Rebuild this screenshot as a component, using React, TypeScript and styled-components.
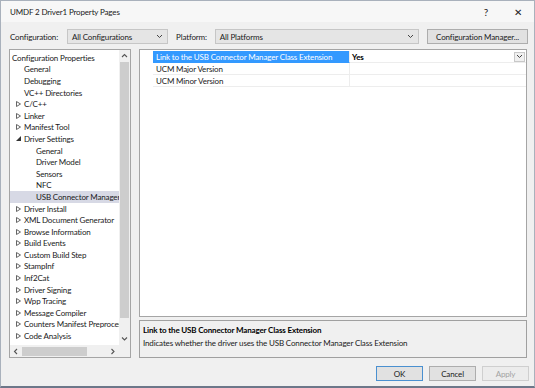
import React from 'react'
import styled, { createGlobalStyle } from 'styled-components'

const GlobalStyle = createGlobalStyle`
  html, body {
    margin: 0;
    padding: 0;
    background: #f0f0f0;
  }
  * {
    box-sizing: border-box;
  }
`

const Window = styled.div`
  width: 535px;
  height: 388px;
  display: flex;
  flex-direction: column;
  background: #f0f0f0;
  border: 1px solid #a9b1bc;
  border-bottom: 2px solid #6d7789;
  font-family: Lato, 'Liberation Sans', sans-serif;
  font-size: 8px;
  letter-spacing: -0.15px;
  color: #1a1a1a;
  overflow: hidden;
`

const TitleBar = styled.div`
  height: 21px;
  display: flex;
  align-items: center;
  padding: 0 0 0 9px;
  background: #f7f7f7;
`

const Title = styled.div`
  flex: 1;
`

const Caption = styled.div`
  width: 32px;
  text-align: center;
  font-size: 10px;
  color: #222;
`

const ConfigRow = styled.div`
  display: flex;
  align-items: center;
  height: 15px;
  margin-top: 7px;
  padding: 0 6px 0 9px;
`

const Label = styled.div<{ $gap: number }>`
  margin-right: ${(p) => p.$gap}px;
`

const Select = styled.div<{ $width?: number }>`
  height: 15px;
  ${(p) => (p.$width ? `width: ${p.$width}px;` : 'flex: 1;')}
  display: flex;
  align-items: center;
  justify-content: space-between;
  padding: 0 4px 0 4px;
  margin-right: 8px;
  background: #e5e5e5;
  border: 1px solid #c6c6c6;
`

const Chevron = () => (
  <svg width="7" height="5" viewBox="0 0 7 5">
    <path d="M1 1 L3.5 3.5 L6 1" fill="none" stroke="#444" strokeWidth="1" />
  </svg>
)

const Button = styled.div<{ $default?: boolean; $disabled?: boolean; $width?: number }>`
  height: 15px;
  width: ${(p) => p.$width ?? 47}px;
  display: flex;
  align-items: center;
  justify-content: center;
  background: ${(p) => (p.$disabled ? '#ececec' : '#e1e1e1')};
  border: 1px solid ${(p) => (p.$default ? '#4a90d0' : p.$disabled ? '#cfcfcf' : '#adadad')};
  color: ${(p) => (p.$disabled ? '#a3a3a3' : '#1a1a1a')};
`

const Body = styled.div`
  display: flex;
  gap: 8px;
  padding: 0 7px 0 8px;
  margin-top: 5px;
  height: 309px;
`

const TreePanel = styled.div`
  width: 122px;
  display: grid;
  grid-template-columns: 1fr 11px;
  grid-template-rows: 1fr 12px;
  background: #fff;
  border: 1px solid #a5a5a5;
`

const TreeList = styled.div`
  padding-top: 2px;
  overflow: hidden;
  white-space: nowrap;
`

const TreeRow = styled.div<{ $level: number; $selected?: boolean }>`
  height: 11.6px;
  display: flex;
  align-items: center;
  padding-left: ${(p) => 2 + p.$level * 12}px;
  background: ${(p) => (p.$selected ? '#d7d9e5' : 'transparent')};
`

const Toggle = styled.span`
  width: 12px;
  display: inline-flex;
  justify-content: center;
  flex-shrink: 0;
`

const VScroll = styled.div`
  display: flex;
  flex-direction: column;
  align-items: center;
  background: #f0f0f0;
`

const ScrollArrow = styled.div<{ $w?: number }>`
  height: 12px;
  width: ${(p) => (p.$w ? `${p.$w}px` : '100%')};
  display: flex;
  align-items: center;
  justify-content: center;
`

const Spacer = styled.div`
  flex: 1;
`

const VThumb = styled.div`
  width: 9px;
  height: 256px;
  background: #cdcdcd;
`

const HScroll = styled.div`
  display: flex;
  align-items: center;
  background: #f0f0f0;
`

const HThumb = styled.div`
  width: 65px;
  height: 9px;
  background: #cdcdcd;
`

const Corner = styled.div`
  background: #f0f0f0;
`

const RightSide = styled.div`
  flex: 1;
  display: flex;
  flex-direction: column;
  gap: 3px;
`

const Grid = styled.div`
  flex: 1;
  background: #fff;
  border: 1px solid #a5a5a5;
  padding-top: 1px;
`

const PropRow = styled.div`
  display: grid;
  grid-template-columns: 13px 197px 1fr;
  grid-template-rows: 12px;
  height: 12px;
`

const Gutter = styled.div`
  background: #fff;
`

const NameCell = styled.div<{ $selected?: boolean }>`
  display: flex;
  align-items: center;
  padding-left: 3px;
  white-space: nowrap;
  overflow: hidden;
  background: ${(p) => (p.$selected ? '#3399ff' : '#fff')};
  color: ${(p) => (p.$selected ? '#fff' : '#1a1a1a')};
  border-bottom: 1px solid ${(p) => (p.$selected ? '#3399ff' : '#ededed')};
  border-right: 1px solid #ededed;
`

const ValueCell = styled.div`
  display: flex;
  align-items: center;
  justify-content: space-between;
  padding: 0 1px 0 2px;
  font-weight: 700;
  color: #000;
  border-bottom: 1px solid #ededed;
`

const DropBox = styled.div`
  width: 11px;
  height: 10px;
  display: flex;
  align-items: center;
  justify-content: center;
  background: #f0f0f0;
  border: 1px solid #c8c8c8;
`

const Description = styled.div`
  height: 38px;
  padding: 4px 3px;
  background: #f0f0f0;
  border: 1px solid #a0a0a0;
  display: flex;
  flex-direction: column;
  gap: 3px;
`

const DescTitle = styled.div`
  font-weight: 700;
  color: #000;
`

const Footer = styled.div`
  display: flex;
  justify-content: flex-end;
  gap: 6px;
  padding: 8px 5px 0 0;
`

const Collapsed = () => (
  <svg width="5" height="6" viewBox="0 0 5 6">
    <path d="M0.5 0.5 L4.5 3 L0.5 5.5 Z" fill="none" stroke="#555" strokeWidth="0.9" />
  </svg>
)

const Expanded = () => (
  <svg width="5" height="5" viewBox="0 0 5 5">
    <path d="M5 0 L5 5 L0 5 Z" fill="#333" />
  </svg>
)

const Arrow = ({ dir }: { dir: 'up' | 'down' | 'left' | 'right' }) => {
  const paths = {
    up: 'M1 4 L3.5 1.5 L6 4',
    down: 'M1 1.5 L3.5 4 L6 1.5',
    left: 'M4 1 L1.5 3.5 L4 6',
    right: 'M1.5 1 L4 3.5 L1.5 6',
  }
  const w = dir === 'up' || dir === 'down' ? 7 : 6
  const h = dir === 'up' || dir === 'down' ? 6 : 7
  return (
    <svg width={w} height={h} viewBox={`0 0 ${w} ${h}`}>
      <path d={paths[dir]} fill="none" stroke="#555" strokeWidth="1.1" />
    </svg>
  )
}

type Node = { label: string; level: number; toggle?: 'open' | 'closed'; selected?: boolean }

const tree: Node[] = [
  { label: 'Configuration Properties', level: 0 },
  { label: 'General', level: 1 },
  { label: 'Debugging', level: 1 },
  { label: 'VC++ Directories', level: 1 },
  { label: 'C/C++', level: 0, toggle: 'closed' },
  { label: 'Linker', level: 0, toggle: 'closed' },
  { label: 'Manifest Tool', level: 0, toggle: 'closed' },
  { label: 'Driver Settings', level: 0, toggle: 'open' },
  { label: 'General', level: 2 },
  { label: 'Driver Model', level: 2 },
  { label: 'Sensors', level: 2 },
  { label: 'NFC', level: 2 },
  { label: 'USB Connector Manager', level: 2, selected: true },
  { label: 'Driver Install', level: 0, toggle: 'closed' },
  { label: 'XML Document Generator', level: 0, toggle: 'closed' },
  { label: 'Browse Information', level: 0, toggle: 'closed' },
  { label: 'Build Events', level: 0, toggle: 'closed' },
  { label: 'Custom Build Step', level: 0, toggle: 'closed' },
  { label: 'StampInf', level: 0, toggle: 'closed' },
  { label: 'Inf2Cat', level: 0, toggle: 'closed' },
  { label: 'Driver Signing', level: 0, toggle: 'closed' },
  { label: 'Wpp Tracing', level: 0, toggle: 'closed' },
  { label: 'Message Compiler', level: 0, toggle: 'closed' },
  { label: 'Counters Manifest Preprocessor', level: 0, toggle: 'closed' },
  { label: 'Code Analysis', level: 0, toggle: 'closed' },
  { label: 'ApiValidator', level: 0, toggle: 'closed' },
]

const props = [
  { name: 'Link to the USB Connector Manager Class Extension', value: 'Yes', selected: true },
  { name: 'UCM Major Version', value: '' },
  { name: 'UCM Minor Version', value: '' },
]

const App = () => {
  return (
    <>
      <GlobalStyle />
      <Window>
        <TitleBar>
          <Title>UMDF 2 Driver1 Property Pages</Title>
          <Caption>?</Caption>
          <Caption>✕</Caption>
        </TitleBar>
        <ConfigRow>
          <Label $gap={9}>Configuration:</Label>
          <Select $width={101}>
            All Configurations
            <Chevron />
          </Select>
          <Label $gap={8}>Platform:</Label>
          <Select>
            All Platforms
            <Chevron />
          </Select>
          <Button $width={101}>Configuration Manager...</Button>
        </ConfigRow>
        <Body>
          <TreePanel>
            <TreeList>
              {tree.map((n, i) => (
                <TreeRow key={i} $level={n.level} $selected={n.selected}>
                  {n.toggle && (
                    <Toggle>{n.toggle === 'closed' ? <Collapsed /> : <Expanded />}</Toggle>
                  )}
                  {n.label}
                </TreeRow>
              ))}
            </TreeList>
            <VScroll>
              <ScrollArrow>
                <Arrow dir="up" />
              </ScrollArrow>
              <VThumb />
              <Spacer />
              <ScrollArrow>
                <Arrow dir="down" />
              </ScrollArrow>
            </VScroll>
            <HScroll>
              <ScrollArrow $w={12}>
                <Arrow dir="left" />
              </ScrollArrow>
              <HThumb />
              <Spacer />
              <ScrollArrow $w={12}>
                <Arrow dir="right" />
              </ScrollArrow>
            </HScroll>
            <Corner />
          </TreePanel>
          <RightSide>
            <Grid>
              {props.map((p) => (
                <PropRow key={p.name}>
                  <Gutter />
                  <NameCell $selected={p.selected}>{p.name}</NameCell>
                  <ValueCell>
                    {p.value}
                    {p.selected && (
                      <DropBox>
                        <Chevron />
                      </DropBox>
                    )}
                  </ValueCell>
                </PropRow>
              ))}
            </Grid>
            <Description>
              <DescTitle>Link to the USB Connector Manager Class Extension</DescTitle>
              <div>Indicates whether the driver uses the USB Connector Manager Class Extension</div>
            </Description>
          </RightSide>
        </Body>
        <Footer>
          <Button $default>OK</Button>
          <Button>Cancel</Button>
          <Button $disabled>Apply</Button>
        </Footer>
      </Window>
    </>
  )
}

export default App
